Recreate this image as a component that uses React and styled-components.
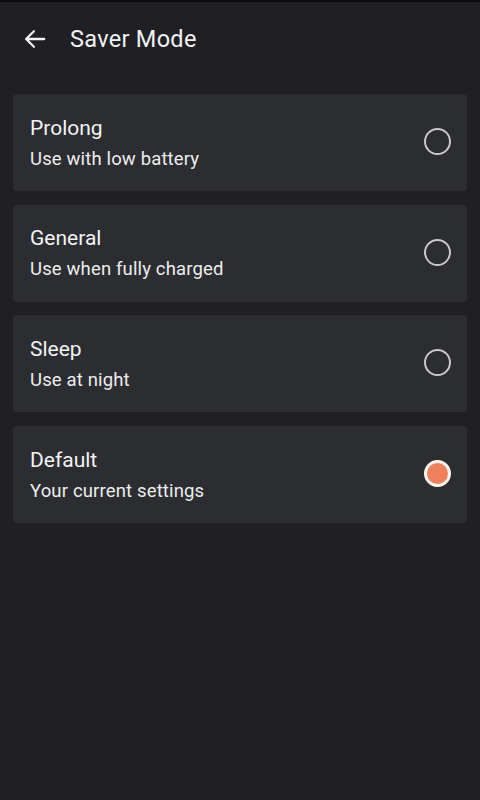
import React, { useState } from "react";
import styled, { createGlobalStyle } from "styled-components";

const GlobalStyle = createGlobalStyle`
  html, body {
    margin: 0;
    padding: 0;
    background: #202024;
  }
  body {
    font-family: Roboto, "Noto Sans", sans-serif;
    color: #f2f2f2;
  }
`;

const modes = [
  { id: "prolong", title: "Prolong", desc: "Use with low battery" },
  { id: "general", title: "General", desc: "Use when fully charged" },
  { id: "sleep", title: "Sleep", desc: "Use at night" },
  { id: "default", title: "Default", desc: "Your current settings" },
];

function App() {
  const [selected, setSelected] = useState("default");

  return (
    <Screen>
      <GlobalStyle />
      <Toolbar>
        <BackButton aria-label="Back">
          <svg width="26" height="26" viewBox="0 0 24 24" fill="none">
            <path
              d="M20.5 12H4M11 4.8L3.8 12l7.2 7.2"
              stroke="#f4f4f4"
              strokeWidth="2.1"
              strokeLinecap="round"
              strokeLinejoin="round"
            />
          </svg>
        </BackButton>
        <Title>Saver Mode</Title>
      </Toolbar>
      <List>
        {modes.map((m) => (
          <Card key={m.id} onClick={() => setSelected(m.id)}>
            <Texts>
              <CardTitle>{m.title}</CardTitle>
              <CardDesc>{m.desc}</CardDesc>
            </Texts>
            <Radio $checked={selected === m.id} />
          </Card>
        ))}
      </List>
    </Screen>
  );
}

export default App;

const Screen = styled.div`
  min-height: 800px;
  background: #202024;
  border-top: 2px solid #0e0e12;
  box-sizing: border-box;
`;

const Toolbar = styled.div`
  display: flex;
  align-items: center;
  height: 74px;
  padding: 0 0 0 22px;
`;

const BackButton = styled.button`
  display: flex;
  align-items: center;
  justify-content: center;
  width: 26px;
  height: 26px;
  padding: 0;
  background: none;
  border: none;
  margin-right: 22px;
  cursor: pointer;
`;

const Title = styled.div`
  font-size: 23.5px;
  letter-spacing: 0.3px;
  color: #f2f2f2;
`;

const List = styled.div`
  display: flex;
  flex-direction: column;
  gap: 13.7px;
  padding: 18px 13px 0;
`;

const Card = styled.div`
  display: flex;
  align-items: center;
  justify-content: space-between;
  height: 97px;
  padding: 0 16px 0 17px;
  background: #2c2d31;
  border-radius: 4px;
  box-sizing: border-box;
  cursor: pointer;
`;

const Texts = styled.div`
  display: flex;
  flex-direction: column;
  gap: 8px;
  margin-top: 0;
`;

const CardTitle = styled.div`
  font-size: 21px;
  line-height: 24px;
  color: #f2f2f2;
`;

const CardDesc = styled.div`
  font-size: 18.5px;
  line-height: 22px;
  letter-spacing: 0.15px;
  color: #ededed;
`;

const Radio = styled.span`
  width: 27px;
  height: 27px;
  border-radius: 50%;
  box-sizing: border-box;
  border: ${(p) => (p.$checked ? "3px solid #fbf6ee" : "2px solid #c9c9cb")};
  background: ${(p) => (p.$checked ? "#f0805a" : "transparent")};
  margin-top: -2px;
`;
